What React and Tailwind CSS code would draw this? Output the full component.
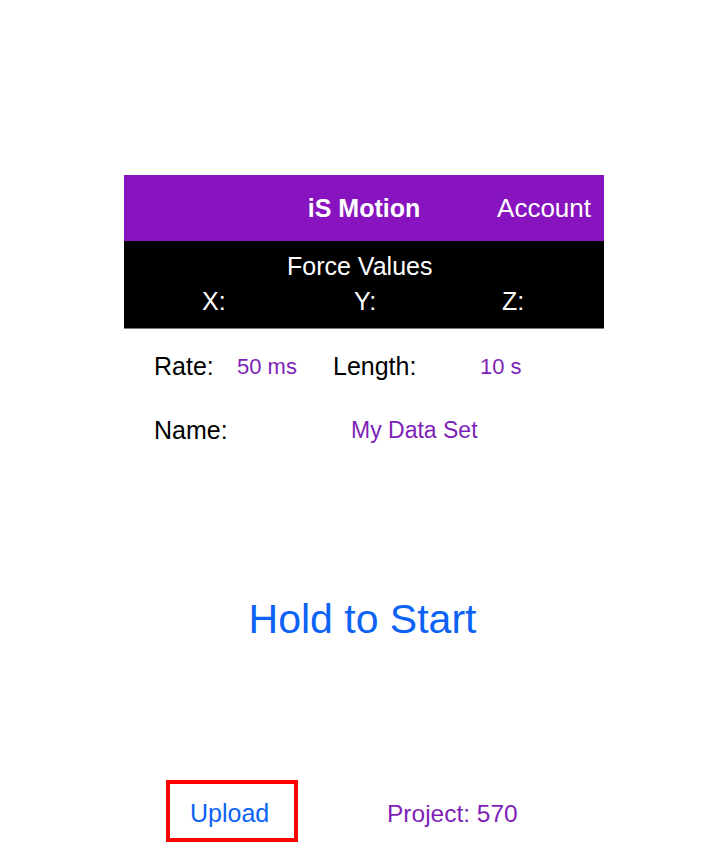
import React from "react";

export default function App() {
  return (
    <div className="w-[720px] h-[864px] bg-white font-['Liberation_Sans',Arial,sans-serif] pt-[175px]">
      {/* top bar */}
      <header className="ml-[124px] w-[480px] h-[66px] bg-[#8714be] grid grid-cols-[1fr_auto_1fr] items-center text-white text-[25px] leading-[25px] pt-[1px]">
        <div />
        <h1 className="font-bold">iS Motion</h1>
        <span className="justify-self-end pr-[13px] text-[26px]">Account</span>
      </header>

      {/* force values */}
      <section className="ml-[124px] w-[480px] h-[88px] bg-black border-b border-[#7a7a7a] text-white text-[25px] leading-[25px] pt-[13px]">
        <div className="pl-[163px]">Force Values</div>
        <div className="flex pl-[78px] mt-[10px]">
          <span className="w-[152px]">X:</span>
          <span className="w-[148px]">Y:</span>
          <span>Z:</span>
        </div>
      </section>

      {/* settings */}
      <div className="h-[74px] flex items-center pl-[154px] text-[25px] leading-[25px] pt-[1px]">
        <span className="w-[83px] text-black">Rate:</span>
        <span className="w-[96px] text-[#7e1fb8] text-[22px]">50 ms</span>
        <span className="w-[147px] text-black">Length:</span>
        <span className="text-[#7e1fb8] text-[22px]">10 s</span>
      </div>
      <div className="h-[54px] flex items-center pl-[154px] text-[25px] leading-[25px] pt-[1px]">
        <span className="w-[197px] text-black">Name:</span>
        <span className="text-[#7e1fb8] text-[23px]">My Data Set</span>
      </div>

      {/* start */}
      <div className="h-[323px] flex items-center justify-center ml-[124px] w-[477px] pt-[1px]">
        <button className="text-[41px] leading-[41px] text-[#0b62f4]">Hold to Start</button>
      </div>

      {/* bottom */}
      <div className="flex items-center pl-[166px] h-[62px]">
        <button className="w-[132px] h-[62px] border-4 border-[#ff0000] text-[#0b62f4] text-[25px] leading-[25px] text-left pl-[20px] pt-[5px]">
          Upload
        </button>
        <span className="ml-[89px] pt-[5px] text-[#7e1fb8] text-[24.5px] leading-[24px]">Project: 570</span>
      </div>
    </div>
  );
}
